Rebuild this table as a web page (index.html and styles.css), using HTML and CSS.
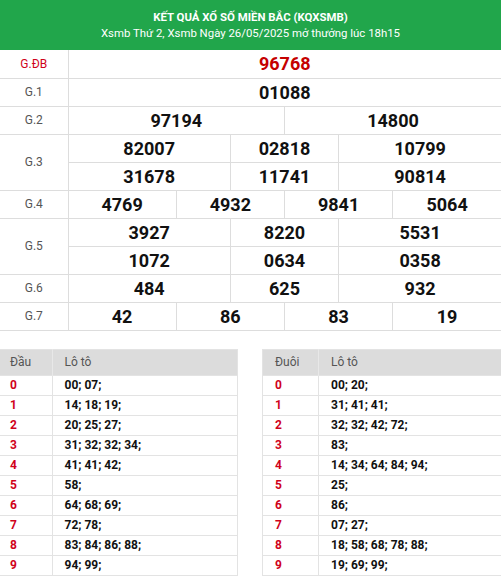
FILE: index.html
```html
<!DOCTYPE html>
<html lang="vi">
<head>
<meta charset="utf-8">
<title>KQXSMB</title>
<link rel="stylesheet" href="styles.css">
</head>
<body>
<div class="page">
  <div class="banner">
    <div class="banner-title">KẾT QUẢ XỔ SỐ MIỀN BẮC (KQXSMB)</div>
    <div class="banner-sub">Xsmb Thứ 2, Xsmb Ngày 26/05/2025 mở thưởng lúc 18h15</div>
  </div>

  <table class="results">
    <colgroup>
      <col class="c-label">
      <col><col><col><col><col><col><col><col>
    </colgroup>
    <tbody>
      <tr><td class="label special">G.ĐB</td><td class="num special" colspan="8">96768</td></tr>
      <tr><td class="label">G.1</td><td class="num" colspan="8">01088</td></tr>
      <tr><td class="label">G.2</td><td class="num" colspan="4">97194</td><td class="num" colspan="4">14800</td></tr>
      <tr><td class="label" rowspan="2">G.3</td><td class="num" colspan="3">82007</td><td class="num" colspan="2">02818</td><td class="num" colspan="3">10799</td></tr>
      <tr><td class="num" colspan="3">31678</td><td class="num" colspan="2">11741</td><td class="num" colspan="3">90814</td></tr>
      <tr><td class="label">G.4</td><td class="num" colspan="2">4769</td><td class="num" colspan="2">4932</td><td class="num" colspan="2">9841</td><td class="num" colspan="2">5064</td></tr>
      <tr><td class="label" rowspan="2">G.5</td><td class="num" colspan="3">3927</td><td class="num" colspan="2">8220</td><td class="num" colspan="3">5531</td></tr>
      <tr><td class="num" colspan="3">1072</td><td class="num" colspan="2">0634</td><td class="num" colspan="3">0358</td></tr>
      <tr><td class="label">G.6</td><td class="num" colspan="3">484</td><td class="num" colspan="2">625</td><td class="num" colspan="3">932</td></tr>
      <tr><td class="label">G.7</td><td class="num" colspan="2">42</td><td class="num" colspan="2">86</td><td class="num" colspan="2">83</td><td class="num" colspan="2">19</td></tr>
    </tbody>
  </table>

  <div class="loto-wrap">
    <table class="loto">
      <colgroup><col class="c-key"><col></colgroup>
      <thead><tr><th>Đầu</th><th>Lô tô</th></tr></thead>
      <tbody>
        <tr><td class="key">0</td><td class="vals">00; 07;</td></tr>
        <tr><td class="key">1</td><td class="vals">14; 18; 19;</td></tr>
        <tr><td class="key">2</td><td class="vals">20; 25; 27;</td></tr>
        <tr><td class="key">3</td><td class="vals">31; 32; 32; 34;</td></tr>
        <tr><td class="key">4</td><td class="vals">41; 41; 42;</td></tr>
        <tr><td class="key">5</td><td class="vals">58;</td></tr>
        <tr><td class="key">6</td><td class="vals">64; 68; 69;</td></tr>
        <tr><td class="key">7</td><td class="vals">72; 78;</td></tr>
        <tr><td class="key">8</td><td class="vals">83; 84; 86; 88;</td></tr>
        <tr><td class="key">9</td><td class="vals">94; 99;</td></tr>
      </tbody>
    </table>
    <table class="loto right">
      <colgroup><col class="c-key"><col></colgroup>
      <thead><tr><th>Đuôi</th><th>Lô tô</th></tr></thead>
      <tbody>
        <tr><td class="key">0</td><td class="vals">00; 20;</td></tr>
        <tr><td class="key">1</td><td class="vals">31; 41; 41;</td></tr>
        <tr><td class="key">2</td><td class="vals">32; 32; 42; 72;</td></tr>
        <tr><td class="key">3</td><td class="vals">83;</td></tr>
        <tr><td class="key">4</td><td class="vals">14; 34; 64; 84; 94;</td></tr>
        <tr><td class="key">5</td><td class="vals">25;</td></tr>
        <tr><td class="key">6</td><td class="vals">86;</td></tr>
        <tr><td class="key">7</td><td class="vals">07; 27;</td></tr>
        <tr><td class="key">8</td><td class="vals">18; 58; 68; 78; 88;</td></tr>
        <tr><td class="key">9</td><td class="vals">19; 69; 99;</td></tr>
      </tbody>
    </table>
  </div>
</div>
</body>
</html>
```
FILE: styles.css
```css
* { box-sizing: border-box; }
html, body { margin: 0; padding: 0; background: #fff; }
body { font-family: Roboto, "Liberation Sans", Arial, sans-serif; color: #111; }

.page { width: 501px; }

.banner {
  background: #21a64b;
  color: #fff;
  text-align: center;
  height: 50px;
  padding-top: 9px;
}
.banner-title { font-size: 11.4px; font-weight: 700; line-height: 16px; }
.banner-sub { font-size: 11.4px; line-height: 17px; }

.results {
  width: 501px;
  border-collapse: collapse;
  table-layout: fixed;
}
.results .c-label { width: 68px; }
.results td {
  border: 1px solid #ddd;
  height: 28px;
  padding: 0;
  text-align: center;
  vertical-align: middle;
}
.results tr td:first-child { border-left: none; }
.results tr td:last-child { border-right: none; }
.results tr:first-child td { border-top: none; }
.results .label { font-size: 12px; color: #555; }
.results .label.special { color: #d0021b; }
.results .num { font-size: 18px; font-weight: 700; color: #111; line-height: 20px; padding-top: 1px; }
.results .num.special { color: #c50000; }

.loto-wrap {
  display: flex;
  justify-content: space-between;
  margin-top: 18px;
}
.loto {
  width: 238px;
  border-collapse: collapse;
  table-layout: fixed;
  border: 1px solid #e3e3e3;
  border-left: none;
}
.loto.right { width: 239px; border-left: 1px solid #e3e3e3; border-right: none; }
.loto .c-key { width: 52px; }
.loto.right .c-key { width: 56px; }
.loto th {
  background: #dcdcdc;
  height: 26px;
  font-size: 12px;
  font-weight: 400;
  color: #555;
  text-align: left;
  padding: 0 0 0 12px;
  border-left: 1px solid #e8e8e8;
}
.loto th:first-child { border-left: none; padding-left: 10px; }
.loto.right th:first-child { padding-left: 12px; }
.loto td {
  height: 20px;
  padding: 0 0 0 12px;
  border-top: 1px solid #e3e3e3;
  font-size: 12px;
  font-weight: 700;
  line-height: 16px;
}
.loto td.key { color: #d0021b; padding-left: 10px; border-right: 1px solid #e3e3e3; }
.loto.right td.key { padding-left: 12px; }
.loto td.vals { color: #111; }
```
